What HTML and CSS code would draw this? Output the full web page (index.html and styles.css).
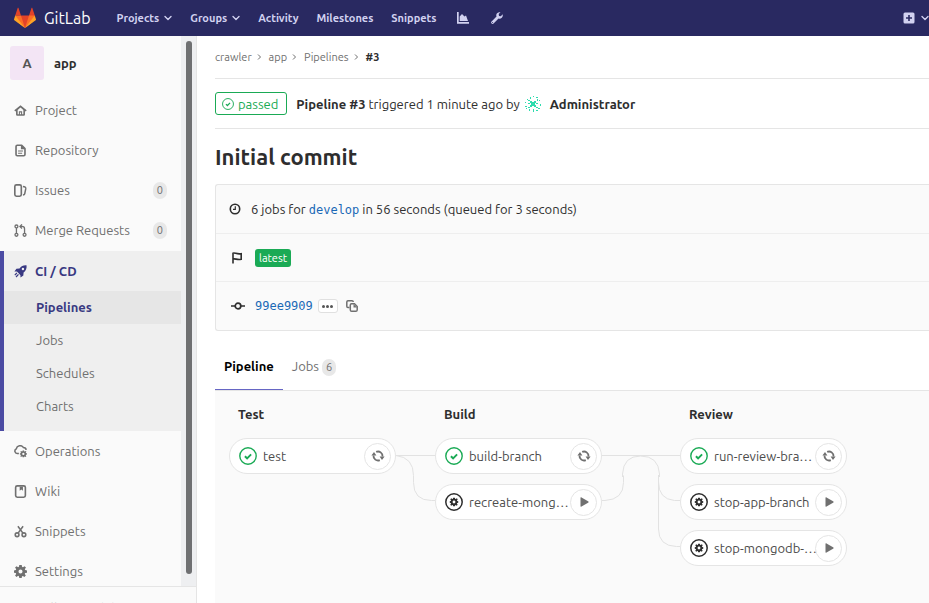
FILE: index.html
```html
<!DOCTYPE html>
<html lang="en">
<head>
<meta charset="utf-8">
<title>Pipeline #3 · app · GitLab</title>
<link rel="stylesheet" href="styles.css">
</head>
<body>
<svg class="sprite" aria-hidden="true">
  <symbol id="chevron-down" viewBox="0 0 8 8"><path d="M1 2.5l3 3 3-3" fill="none" stroke="currentColor" stroke-width="1.4" stroke-linecap="round" stroke-linejoin="round"/></symbol>
  <symbol id="chevron-right" viewBox="0 0 8 8"><path d="M3 1.5L5.5 4 3 6.500" fill="none" stroke="currentColor" stroke-width="1"/></symbol>
  <symbol id="chart" viewBox="0 0 12 12"><path d="M0 0h1.700v10H12v1.700H0z"/><path d="M2.700 9V4.500L5 2l2.500 2.500 1.500-1L11 9z"/></symbol>
  <symbol id="wrench" viewBox="0 0 12 12"><path d="M11.700 2.300L9.800 4.200 8 3.900l-.3-1.800L9.500.3C7.700-.3 5.600.8 5.300 2.800c-.1.600 0 1.200.2 1.700L.6 9.400c-.7.700-.7 1.500 0 2.100.6.600 1.400.6 2 0l4.900-5c2.300.8 4.800-1.300 4.200-4.200zM1.600 11a.5.5 0 110-1 .5.5 0 010 1z"/></symbol>
  <symbol id="plus-square" viewBox="0 0 12 12"><path fill-rule="evenodd" d="M2 .5h8A1.500 1.500 0 0111.500 2v8a1.500 1.500 0 01-1.500 1.500H2A1.500 1.500 0 01.5 10V2A1.500 1.500 0 012 .5zM5.200 3v2.200H3v1.600h2.200V9h1.600V6.800H9V5.200H6.800V3z"/></symbol>
  <symbol id="home" viewBox="0 0 16 16"><path fill-rule="evenodd" d="M8 1.500l7.600 6.200-.9 1.200H13.500V13a1.500 1.500 0 01-1.500 1.500H4A1.500 1.500 0 012.500 13V8.900H1.300L.4 7.700zM4.500 7.500v5H6V9h4v3.500h1.500v-5L8 4.400zM7.300 10.500v2h1.400v-2z"/></symbol>
  <symbol id="doc" viewBox="0 0 16 16"><path fill="none" stroke="currentColor" stroke-width="2" stroke-linejoin="round" d="M4 1.500h5.500L13.500 5.500V13a1.500 1.500 0 01-1.500 1.500H4A1.500 1.500 0 012.500 13V3A1.500 1.500 0 014 1.500z"/><path d="M8.500 2v4.500H13V5L10 2zM5 8h6v1.300H5zM5 10.700h5V12H5z"/></symbol>
  <symbol id="issues" viewBox="0 0 16 16"><rect x="1" y="1" width="8" height="14" rx="2" fill="none" stroke="currentColor" stroke-width="2"/><path d="M11 3.200c2.500.2 3.700.9 3.500 2.500L13.200 12c-.2 1-.9 1.500-2.200 1.500" fill="none" stroke="currentColor" stroke-width="1.800"/></symbol>
  <symbol id="merge" viewBox="0 0 16 16"><g fill="none" stroke="currentColor" stroke-width="1.600"><circle cx="3" cy="3" r="1.800"/><circle cx="3" cy="13.300" r="1.800"/><circle cx="13" cy="13.300" r="1.800"/><path d="M3 5v6.500M13 11.500V6c0-2-1-3-3-3H7.500M9.800.5L7.300 3l2.500 2.500"/></g></symbol>
  <symbol id="rocket" viewBox="0 0 16 16"><path fill-rule="evenodd" d="M15.500.5C11.500.2 9 1.500 6.800 4.200L3 4.500.5 8l3 .1 1.600 1.400L7.900 12.500l.1 3 3.500-2.500.3-3.800C14.500 7 15.800 4.500 15.500.5zM11 6.500a1.500 1.500 0 110-3 1.500 1.500 0 010 3z"/><path d="M1 12.500l2.500-2.700M2.500 14.800l3-3.300" stroke="currentColor" stroke-width="1.500"/></symbol>
  <symbol id="gear" viewBox="0 0 16 16"><path fill-rule="evenodd" d="M6.500 0h3l.4 2.300 1.100.5L13 1.500 14.700 3.200l-1.400 1.900.5 1.200L16 6.700v2.800l-2.300.4-.5 1.100 1.400 2-1.900 1.800-1.800-1.300-1.100.5L9.500 16h-3l-.4-2.200-1.100-.5L3.100 14.700 1.300 13l1.400-1.900-.5-1.200L0 9.500V6.700l2.200-.4.5-1.200-1.400-1.900L3.200 1.500 5 2.800l1.100-.5zM8 5.500a2.500 2.500 0 100 5 2.500 2.500 0 000-5z"/></symbol>
  <symbol id="operations" viewBox="0 0 16 16"><path d="M6 10.500H4a3 3 0 01-1.200-5.700A4.800 4.800 0 0111.500 3c2 0 3.300 1.200 3.500 3" fill="none" stroke="currentColor" stroke-width="1.900"/><svg x="7" y="6.500" width="9" height="9" viewBox="0 0 16 16"><use href="#gear"/></svg></symbol>
  <symbol id="wiki" viewBox="0 0 16 16"><rect x="2" y="1" width="12" height="14" rx="2" fill="none" stroke="currentColor" stroke-width="2"/><path d="M7 2h4v5L9 5.600 7 7z"/></symbol>
  <symbol id="scissors" viewBox="0 0 16 16"><g fill="none" stroke="currentColor" stroke-width="1.900"><circle cx="3.800" cy="12" r="2.300"/><circle cx="12.200" cy="12" r="2.300"/><path d="M5 10l6.200-8.500M11 10L4.800 1.500"/></g></symbol>
  <symbol id="check-circle" viewBox="0 0 18 18"><circle cx="9" cy="9" r="8.200" fill="none" stroke="currentColor" stroke-width="1.400"/><path d="M5.900 9.200l2.200 2.100 4-4" fill="none" stroke="currentColor" stroke-width="1.900"/></symbol>
  <symbol id="manual" viewBox="0 0 18 18"><circle cx="9" cy="9" r="8.200" fill="none" stroke="currentColor" stroke-width="1.500"/><svg x="4.500" y="4.500" width="9" height="9" viewBox="0 0 16 16"><use href="#gear"/></svg></symbol>
  <symbol id="retry" viewBox="0 0 14 14"><path d="M5.200 2.900A4.500 4.500 0 0111.500 7.500M8.800 11.100A4.500 4.500 0 012.500 6.500" fill="none" stroke="currentColor" stroke-width="1.800"/><path d="M13.600 7.600L11 11 8.600 7.400zM.4 6.400L3 3l2.400 3.600z"/></symbol>
  <symbol id="play" viewBox="0 0 14 14"><path d="M3.500 2.500v9l.6.300L11.500 7.400v-.8L4.100 2.200z"/></symbol>
  <symbol id="clock" viewBox="0 0 12 12"><circle cx="6" cy="6" r="4.700" fill="none" stroke="currentColor" stroke-width="1.600"/><path d="M6.300 3.200v3.200H4" fill="none" stroke="currentColor" stroke-width="1.200"/></symbol>
  <symbol id="flag" viewBox="0 0 12 12"><path d="M2 11.500V1.200c2-.8 3.500 1.300 8.200.5v5.600c-4.200.8-5.700-.9-8.200-.3" fill="none" stroke="currentColor" stroke-width="1.600"/></symbol>
  <symbol id="commit" viewBox="0 0 14 14"><circle cx="7" cy="7" r="2.800" fill="none" stroke="currentColor" stroke-width="1.700"/><path d="M0 6.200h4v1.600H0zM10 6.200h4v1.600h-4z"/></symbol>
  <symbol id="copy" viewBox="0 0 12 12"><path d="M3.500 7.500H2A1.300 1.300 0 01.8 6.200V2A1.300 1.300 0 012 .8h4A1.300 1.300 0 017.300 2" fill="none" stroke="currentColor" stroke-width="1.500"/><path d="M5.500 3.800h3l2.700 2.700V10a1.300 1.300 0 01-1.300 1.200H5.600A1.300 1.300 0 014.300 10V5a1.300 1.300 0 011.200-1.200z" fill="none" stroke="currentColor" stroke-width="1.500"/><path d="M7.500 4v3.500H11z"/></symbol>
</svg>

<header class="navbar">
  <a class="brand" href="#">
    <svg class="tanuki" viewBox="0 0 36 36" aria-hidden="true">
      <path fill="#e24329" d="M2 14l9.380 9v-9l-4-12.280c-.205-.632-1.176-.632-1.380 0zM34 14l-9.380 9v-9l4-12.280c.205-.632 1.176-.632 1.380 0zM18 34.380L3 14h30z"/>
      <path fill="#fc6d26" d="M18 34.380L11.380 14H2l4 11zM18 34.380L24.620 14H34l-4 11z"/>
      <path fill="#fca326" d="M2 14L.1 20.160c-.18.565 0 1.200.5 1.560L18 34.380zM34 14l1.900 6.160c.18.565 0 1.200-.5 1.560L18 34.380z"/>
    </svg>
    <span class="wordmark">GitLab</span>
  </a>
  <nav class="topnav" aria-label="Main">
    <button type="button">Projects <svg class="i8"><use href="#chevron-down"/></svg></button>
    <button type="button">Groups <svg class="i8"><use href="#chevron-down"/></svg></button>
    <a href="#">Activity</a>
    <a href="#">Milestones</a>
    <a href="#">Snippets</a>
    <a class="tool" href="#" aria-label="Analytics"><svg class="i12"><use href="#chart"/></svg></a>
    <a class="tool" href="#" aria-label="Admin area"><svg class="i12"><use href="#wrench"/></svg></a>
  </nav>
  <button class="new" type="button" aria-label="New"><svg class="i12"><use href="#plus-square"/></svg><svg class="i8"><use href="#chevron-down"/></svg></button>
</header>

<div class="layout">
  <aside class="sidebar">
    <div class="scroll">
      <div class="side">
        <a class="context" href="#"><span class="avatar">A</span><strong>app</strong></a>
        <nav aria-label="Project">
          <a class="item" href="#"><svg class="i13"><use href="#home"/></svg>Project</a>
          <a class="item" href="#"><svg class="i13"><use href="#doc"/></svg>Repository</a>
          <a class="item" href="#"><svg class="i13"><use href="#issues"/></svg>Issues<span class="count">0</span></a>
          <a class="item" href="#"><svg class="i13"><use href="#merge"/></svg>Merge Requests<span class="count">0</span></a>
          <div class="group">
            <a class="item current" href="#"><svg class="i13"><use href="#rocket"/></svg>CI / CD</a>
            <a class="sub current" href="#">Pipelines</a>
            <a class="sub" href="#">Jobs</a>
            <a class="sub" href="#">Schedules</a>
            <a class="sub" href="#">Charts</a>
          </div>
          <a class="item" href="#"><svg class="i13"><use href="#operations"/></svg>Operations</a>
          <a class="item" href="#"><svg class="i13"><use href="#wiki"/></svg>Wiki</a>
          <a class="item" href="#"><svg class="i13"><use href="#scissors"/></svg>Snippets</a>
          <a class="item" href="#"><svg class="i13"><use href="#gear"/></svg>Settings</a>
        </nav>
      </div>
      <div class="track"><div class="thumb"></div></div>
    </div>
    <button class="collapse" type="button">Collapse sidebar</button>
  </aside>

  <main>
    <nav class="crumbs" aria-label="Breadcrumb">
      <a href="#">crawler</a><svg class="i8"><use href="#chevron-right"/></svg>
      <a href="#">app</a><svg class="i8"><use href="#chevron-right"/></svg>
      <a href="#">Pipelines</a><svg class="i8"><use href="#chevron-right"/></svg>
      <strong>#3</strong>
    </nav>

    <div class="status">
      <a class="passed" href="#"><svg class="i12"><use href="#check-circle"/></svg>passed</a>
      <span><strong>Pipeline #3</strong> triggered 1 minute ago by</span>
      <svg class="identicon" viewBox="0 0 16 16" aria-hidden="true"><path d="M5 5h2v1h2V5h2v2h-1v2h1v2H9v-1H7v1H5V9h1V7H5zM3 7h2v1H3zM11 7h2v1h-2zM3 11h2v1H3zM11 11h2v1h-2zM5 1h1v2H5zM8 0h1v1H8zM11 1h2v1h-2zM2 3h1v1H2zM3 4h2v1H3zM12 3h1v2h-1zM14 4h1v1h-1zM0 6h1v1H0zM15 8h1v2h-1zM0 10h2v1H0zM1 12h1v1H1zM4 13h1v2H4zM8 13h1v3H8zM11 14h2v1h-2zM13 12h2v1h-2z"/></svg>
      <a class="user" href="#">Administrator</a>
    </div>

    <h1>Initial commit</h1>

    <section class="info">
      <div class="row"><svg class="i12"><use href="#clock"/></svg><span>6 jobs for <a class="mono" href="#">develop</a> in 56 seconds (queued for 3 seconds)</span></div>
      <div class="row wide"><svg class="i12"><use href="#flag"/></svg><span class="latest">latest</span></div>
      <div class="row wide"><svg class="i14"><use href="#commit"/></svg><a class="mono" href="#">99ee9909</a>
        <button class="more" type="button" aria-label="Show full message"><i></i><i></i><i></i></button>
        <button class="copy" type="button" aria-label="Copy commit SHA"><svg class="i12"><use href="#copy"/></svg></button></div>
    </section>

    <nav class="tabs" aria-label="Pipeline views">
      <a class="active" href="#">Pipeline</a>
      <a href="#">Jobs <span class="count">6</span></a>
    </nav>

    <section class="graph">
      <div class="stage">
        <h2>Test</h2>
        <div class="job"><svg class="i18 ok"><use href="#check-circle"/></svg><a href="#">test</a><button type="button" aria-label="Retry test"><svg class="i14"><use href="#retry"/></svg></button></div>
      </div>
      <svg class="link" width="39" height="110" viewBox="0 0 39 110" aria-hidden="true"><path d="M0 17.500h39M0 17.500q17.500 2 17.500 20v7q0 18 18 18H39"/></svg>
      <div class="stage">
        <h2>Build</h2>
        <div class="job"><svg class="i18 ok"><use href="#check-circle"/></svg><a href="#">build-branch</a><button type="button" aria-label="Retry build-branch"><svg class="i14"><use href="#retry"/></svg></button></div>
        <div class="job"><svg class="i18"><use href="#manual"/></svg><a href="#">recreate-mong…</a><button type="button" aria-label="Play recreate-mongodb"><svg class="i14"><use href="#play"/></svg></button></div>
      </div>
      <svg class="link" width="78" height="110" viewBox="0 0 78 110" aria-hidden="true"><path d="M0 17.500h78M0 62.500h3q18.500-1 18.500-18v-7M20.500 39v-3q1-18 18-18 18 0 19 18v3M56.500 37v54q0 17 18 17.500H78M56.500 44q0 17 16 18.500H78"/></svg>
      <div class="stage">
        <h2>Review</h2>
        <div class="job"><svg class="i18 ok"><use href="#check-circle"/></svg><a href="#">run-review-bra…</a><button type="button" aria-label="Retry run-review-branch"><svg class="i14"><use href="#retry"/></svg></button></div>
        <div class="job"><svg class="i18"><use href="#manual"/></svg><a href="#">stop-app-branch</a><button type="button" aria-label="Play stop-app-branch"><svg class="i14"><use href="#play"/></svg></button></div>
        <div class="job"><svg class="i18"><use href="#manual"/></svg><a href="#">stop-mongodb-…</a><button type="button" aria-label="Play stop-mongodb-branch"><svg class="i14"><use href="#play"/></svg></button></div>
      </div>
    </section>
  </main>
</div>
</body>
</html>
```
FILE: styles.css
```css
* { box-sizing: border-box; }
body {
  margin: 0;
  height: 100vh;
  display: flex;
  flex-direction: column;
  overflow: hidden;
  font: 13px/20px Ubuntu, "Noto Sans", sans-serif;
  color: #2e2e2e;
  background: #fff;
}
a { color: inherit; text-decoration: none; }
button { font: inherit; color: inherit; background: none; border: 0; padding: 0; }
svg { fill: currentColor; flex: none; }
.sprite { position: absolute; width: 0; height: 0; }
.i8 { width: 8px; height: 8px; }
.i12 { width: 12px; height: 12px; }
.i13 { width: 13px; height: 13px; }
.i14 { width: 14px; height: 14px; }
.i18 { width: 18px; height: 18px; }

.navbar {
  flex: none;
  height: 36px;
  display: flex;
  align-items: center;
  padding: 0 0 0 14px;
  background: #292961;
  color: #d1d1f0;
  font-size: 11px;
  font-weight: 600;
}
.brand { display: flex; align-items: center; gap: 8px; color: #fff; }
.tanuki { width: 22px; height: 22px; }
.wordmark { font-size: 16px; font-weight: 400; }
.topnav { display: flex; align-items: center; gap: 18px; margin-left: 26px; }
.topnav button, .new { display: flex; align-items: center; gap: 5px; }
.tool { display: flex; margin-left: 2px; }
.tool + .tool { margin-left: 4px; }
.new { margin-left: auto; gap: 6px; }

.layout { flex: 1; min-height: 0; display: flex; }
.sidebar {
  flex: none;
  width: 197px;
  display: flex;
  flex-direction: column;
  background: #fafafa;
  border-right: 1px solid #e5e5e5;
  color: #707070;
}
.scroll { flex: 1; min-height: 0; display: flex; overflow: hidden; }
.side { flex: 1; }
.track { width: 15px; padding: 5px 4px 12px 5px; background: #eeeff1; display: flex; }
.thumb { flex: 1; border-radius: 3px; background: #6f7072; }
.context { display: flex; align-items: center; gap: 10px; height: 54px; padding-left: 10px; color: #2e2e2e; }
.avatar {
  width: 34px;
  height: 34px;
  border-radius: 3px;
  background: #f3e5f5;
  color: #555;
  font-weight: 700;
  line-height: 34px;
  text-align: center;
}
.item { display: flex; align-items: center; gap: 8px; height: 40px; padding: 0 14px; }
.count { display: inline-block; padding: 0 4px; border-radius: 9px; background: #e8e8e8; font-size: 11px; line-height: 17px; }
.item .count { margin-left: auto; }
.group { margin-top: 1px; padding-bottom: 8px; background: #efefef; border-left: 4px solid #4b4ba3; }
.group .item { padding-left: 10px; }
.sub { display: block; padding-left: 32px; line-height: 33px; }
.current { color: #393982; font-weight: 700; }
.sub.current { background: #e6e6e6; }
.collapse { flex: none; height: 17px; overflow: hidden; border-top: 1px solid #e5e5e5; padding: 11px 0 0 35px; text-align: left; line-height: 20px; }

main { flex: 1; min-width: 0; display: flex; flex-direction: column; padding-left: 18px; }
.crumbs { display: flex; align-items: center; height: 43px; border-bottom: 1px solid #e5e5e5; color: #707070; font-size: 11px; }
.crumbs svg { margin: 0 6px 0 3px; }
.crumbs strong { color: #2e2e2e; }
.status { display: flex; align-items: center; height: 50px; border-bottom: 1px solid #e5e5e5; }
.passed {
  display: flex;
  align-items: center;
  gap: 4px;
  height: 23px;
  padding: 0 8px 0 6px;
  margin-right: 9px;
  border: 1px solid #1aaa55;
  border-radius: 3px;
  color: #1aaa55;
}
.identicon { width: 16px; height: 16px; margin: 0 9px 0 5px; color: #2fdcae; }
.user { font-weight: 700; }
h1 { margin: 0; font-size: 22px; line-height: 55px; }
.info { border: 1px solid #e5e5e5; border-right: 0; border-radius: 3px 0 0 3px; background: #fafafa; }
.row { display: flex; align-items: center; gap: 10px; height: 48px; padding-left: 13px; }
.row + .row { border-top: 1px solid #eee; }
.row:last-child { height: 49px; }
.wide { gap: 12px; padding-left: 15px; }
.wide .i14 { margin-right: -2px; }
.mono { font: 12px/20px "DejaVu Sans Mono", monospace; color: #1b69b6; }
.latest { padding: 0 4px; border-radius: 3px; background: #1aaa55; color: #fff; font-size: 11px; line-height: 18px; }
.more { display: flex; align-items: center; justify-content: center; gap: 1px; width: 20px; height: 14px; margin-left: -7px; border: 1px solid #e0e0e0; border-radius: 3px; background: #fff; }
.more i { width: 3px; height: 3px; border-radius: 2px; background: #555; }
.copy { display: flex; margin-left: -4px; color: #707070; }
.tabs { display: flex; height: 60px; border-bottom: 1px solid #e5e5e5; color: #707070; }
.tabs a { padding: 25px 9px 0; }
.tabs .active { color: #000; font-weight: 700; border-bottom: 1px solid #6666c4; }
.graph { flex: 1; display: flex; align-items: flex-start; padding: 13px 14px; background: #fafafa; }
.stage { flex: none; width: 167px; }
h2 { margin: 0 0 14px; padding-left: 9px; font-size: 13px; line-height: 20px; }
.job {
  display: flex;
  align-items: center;
  gap: 6px;
  height: 36px;
  padding: 0 4px 0 9px;
  margin-bottom: 10px;
  border: 1px solid #e5e5e5;
  border-radius: 18px;
  background: #fff;
}
.job a { flex: 1; min-width: 0; white-space: nowrap; color: #4c4c4c; }
.job .ok { color: #1aaa55; }
.job button { display: flex; align-items: center; justify-content: center; width: 27px; height: 27px; margin-left: -4px; border: 1px solid #e5e5e5; border-radius: 50%; color: #707070; }
.link { margin-top: 34px; fill: none; stroke: #e2e2e2; }
```
